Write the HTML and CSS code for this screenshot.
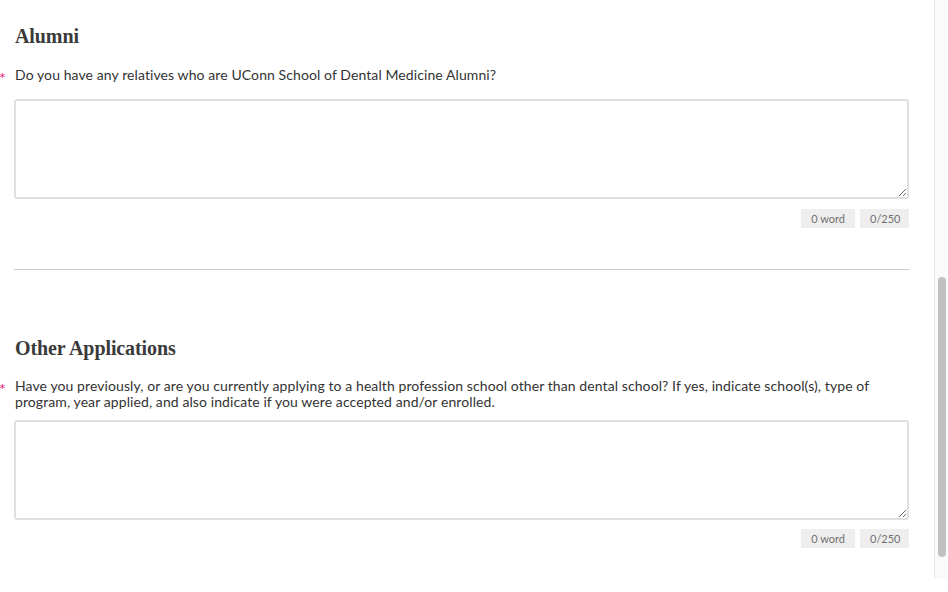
FILE: index.html
```html
<!DOCTYPE html>
<html>
<head>
<meta charset="utf-8">
<link rel="stylesheet" href="styles.css">
</head>
<body>
<div class="page">
  <main class="content">
    <section class="section first">
      <h2 class="heading">Alumni</h2>
      <div class="question">
        <span class="req">*</span>
        <label class="qtext">Do you have any relatives who are UConn School of Dental Medicine Alumni?</label>
      </div>
      <textarea class="answer"></textarea>
      <div class="counters">
        <span class="count">0 word</span>
        <span class="count">0/250</span>
      </div>
    </section>
    <hr class="divider">
    <section class="section second">
      <h2 class="heading">Other Applications</h2>
      <div class="question">
        <span class="req">*</span>
        <label class="qtext">Have you previously, or are you currently applying to a health profession school other than dental school? If yes, indicate school(s), type of program, year applied, and also indicate if you were accepted and/or enrolled.</label>
      </div>
      <textarea class="answer"></textarea>
      <div class="counters">
        <span class="count">0 word</span>
        <span class="count">0/250</span>
      </div>
    </section>
  </main>
  <div class="scrolltrack"><div class="thumb"></div></div>
</div>
</body>
</html>
```
FILE: styles.css
```css
html, body {
  margin: 0;
  padding: 0;
  background: #fff;
}
.page {
  display: flex;
  width: 948px;
  height: 592px;
  overflow: hidden;
}
.content {
  width: 934px;
  box-sizing: border-box;
  padding: 0 25px 0 14px;
  font-family: Lato, "Open Sans", sans-serif;
  color: #333;
}
.section.first {
  padding-top: 24px;
}
.section.second {
  padding-top: 66px;
}
.heading {
  margin: 0 0 0 1px;
  font-family: "Liberation Serif", serif;
  font-size: 20px;
  font-weight: bold;
  color: #3a3a3a;
  line-height: 24px;
  letter-spacing: -0.1px;
}
.question {
  position: relative;
  margin-top: 19px;
  font-size: 14px;
  line-height: 16px;
  padding-left: 1px;
  letter-spacing: 0.09px;
}
.second .question {
  margin-top: 18px;
  line-height: 15.5px;
}
.req {
  position: absolute;
  left: -15px;
  top: 3px;
  color: #e2197b;
  font-size: 16px;
  line-height: 16px;
}
.answer {
  display: block;
  box-sizing: border-box;
  width: 895px;
  height: 100px;
  margin-top: 16px;
  border: 2px solid #e0e0e0;
  border-radius: 3px;
  background: #fff;
  resize: vertical;
  padding: 0;
}
.second .answer {
  margin-top: 11px;
}
.counters {
  display: flex;
  justify-content: flex-end;
  gap: 5px;
  margin-top: 10px;
  font-size: 11px;
  color: #707070;
}
.second .counters {
  margin-top: 9px;
}
.count {
  background: #eeeeee;
  height: 19px;
  line-height: 19px;
  padding: 0 10px;
}
.count:last-child {
  width: 29px;
}
.divider {
  margin: 41px 0 0 0;
  border: 0;
  border-top: 1px solid #cccccc;
  width: 895px;
}
.scrolltrack {
  width: 13px;
  height: 579px;
  background: #fafafa;
  border-left: 1px solid #e6e6e6;
  flex: none;
  display: flex;
  flex-direction: column;
  padding-top: 277px;
  box-sizing: border-box;
}
.thumb {
  width: 8px;
  height: 280px;
  margin-left: 3px;
  background: #c1c1c1;
  border-radius: 4px;
}
```
